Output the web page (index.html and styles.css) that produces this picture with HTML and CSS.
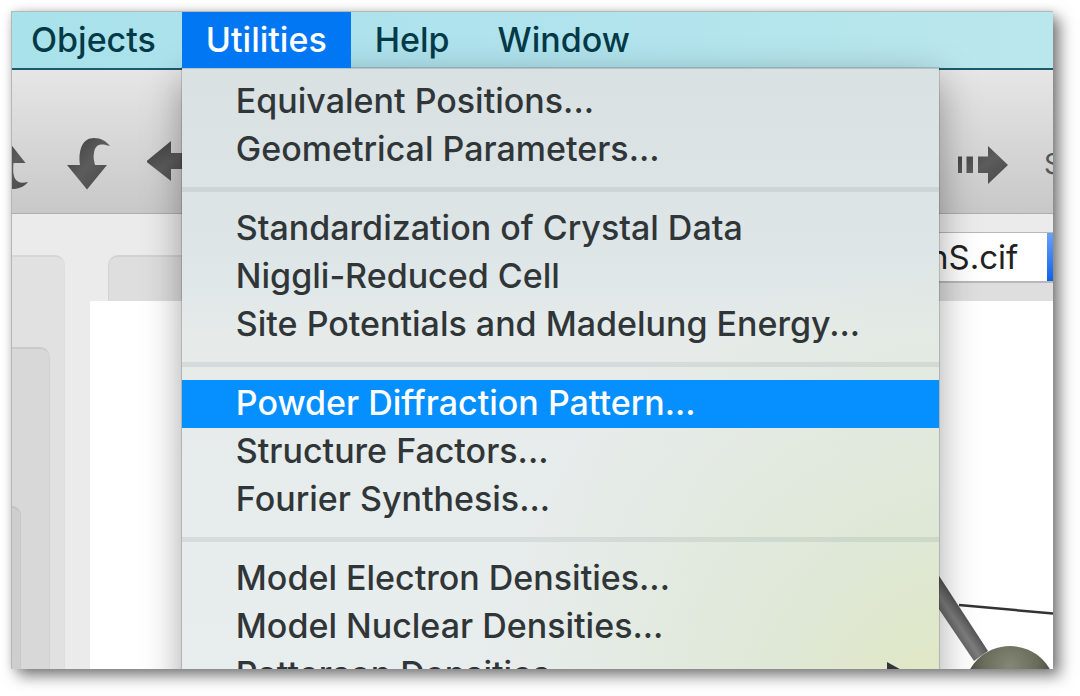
FILE: index.html
```html
<!DOCTYPE html>
<html lang="en">
<head>
<meta charset="utf-8">
<title>Utilities menu</title>
<link rel="stylesheet" href="styles.css">
</head>
<body>
<main class="window">
  <nav class="menubar" aria-label="Application menu">
    <button class="menubar-item" type="button">Objects</button>
    <div class="menubar-entry">
      <button class="menubar-item is-open" type="button" aria-expanded="true">Utilities</button>
      <div class="menu" role="menu">
        <button class="menu-item" type="button" role="menuitem">Equivalent Positions...</button>
        <button class="menu-item" type="button" role="menuitem">Geometrical Parameters...</button>
        <hr class="menu-separator">
        <button class="menu-item" type="button" role="menuitem">Standardization of Crystal Data</button>
        <button class="menu-item" type="button" role="menuitem">Niggli-Reduced Cell</button>
        <button class="menu-item" type="button" role="menuitem">Site Potentials and Madelung Energy...</button>
        <hr class="menu-separator">
        <button class="menu-item is-selected" type="button" role="menuitem">Powder Diffraction Pattern...</button>
        <button class="menu-item" type="button" role="menuitem">Structure Factors...</button>
        <button class="menu-item" type="button" role="menuitem">Fourier Synthesis...</button>
        <hr class="menu-separator">
        <button class="menu-item" type="button" role="menuitem">Model Electron Densities...</button>
        <button class="menu-item" type="button" role="menuitem">Model Nuclear Densities...</button>
        <button class="menu-item" type="button" role="menuitem">Patterson Densities
          <svg class="submenu-arrow" width="20" height="24" viewBox="0 0 20 24" aria-hidden="true"><path d="M0 0 20 11 0 22z"/></svg>
        </button>
      </div>
    </div>
    <button class="menubar-item" type="button">Help</button>
    <button class="menubar-item" type="button">Window</button>
  </nav>

  <div class="toolbar">
    <svg class="defs" width="0" height="0" aria-hidden="true">
      <defs>
        <linearGradient id="ink" x1="0" y1="0" x2="1" y2="1">
          <stop offset="0" stop-color="#3c3c3c"/><stop offset=".5" stop-color="#5c5c5c"/><stop offset="1" stop-color="#484848"/>
        </linearGradient>
      </defs>
    </svg>
    <button class="tool" type="button" aria-label="Rotate up">
      <svg width="19" height="52" viewBox="12 138 19 52"><path fill="url(#ink)" d="M6 138 25.500 163H13.500C12.500 174 13 186 28 182C23 188 17 189 11 189H0V163z"/></svg>
    </button>
    <button class="tool" type="button" aria-label="Rotate down">
      <svg width="44" height="52" viewBox="67 138 44 52"><path fill="url(#ink)" d="M67 165H80C78 149 83 138 94 138C101 138 106 141 110 146C101 143 95 144 94 153C93 157 94 161 95 165H107L87 189.500z"/></svg>
    </button>
    <button class="tool" type="button" aria-label="Rotate left">
      <svg width="50" height="52" viewBox="147 138 50 52"><path fill="url(#ink)" d="M146 161.500 171 141V153H197V169H171V181z"/></svg>
    </button>
    <span class="toolbar-space"></span>
    <button class="tool" type="button" aria-label="Move right">
      <svg width="50" height="52" viewBox="958 138 50 52"><path fill="url(#ink)" d="M958 156.500h4v16.500h-4zM966.500 156.500h6.500v16.500h-6.500zM978 156.500H988V146L1008 165 988 184V173H978z"/></svg>
    </button>
    <span class="toolbar-label">S</span>
  </div>

  <div class="workspace">
    <aside class="panel panel-outer"><div class="panel panel-middle"><div class="panel panel-inner"></div></div></aside>
    <section class="document">
      <div class="tab-strip"></div>
      <div class="canvas">
        <svg class="structure" width="116" height="96" viewBox="937 573 116 96" aria-hidden="true">
          <defs>
            <radialGradient id="atom" cx=".5" cy=".22" r=".5"><stop offset="0" stop-color="#858777"/><stop offset=".6" stop-color="#696b5b"/><stop offset="1" stop-color="#44453a"/></radialGradient>
            <linearGradient id="bond" gradientUnits="userSpaceOnUse" x1="949" y1="630" x2="967" y2="618"><stop offset="0" stop-color="#5c5c5c"/><stop offset=".5" stop-color="#7e7e7e"/><stop offset="1" stop-color="#525252"/></linearGradient>
          </defs>
          <path d="M959 605 1053 613.500" stroke="#333" stroke-width="2.500"/>
          <path d="M930 562 988 651 974 661 930 596z" fill="url(#bond)"/>
          <circle cx="1010" cy="692" r="46" fill="url(#atom)"/>
        </svg>
      </div>
      <label class="file-picker"><span class="picker-name">File</span>
        <select class="picker-select"><option>nS.cif</option></select>
        <span class="picker-button"></span>
      </label>
    </section>
  </div>
</main>
</body>
</html>
```

FILE: styles.css
```css
* { box-sizing: border-box; }

body {
  display: flex;
  height: 100vh;
  margin: 0;
  padding: 11px 27px 27px 11px;
  background: #fff;
  font-family: Inter, "Liberation Sans", sans-serif;
  font-size: 34px;
  font-weight: 500;
}

button {
  margin: 0;
  border: 0;
  padding: 0;
  background: none;
  color: inherit;
  font: inherit;
  white-space: nowrap;
}

.window {
  position: relative;
  display: flex;
  flex: 1;
  flex-direction: column;
  min-width: 0;
  overflow: hidden;
  border: 1px solid #b4b8b8;
  border-right-width: 0;
  border-bottom-width: 0;
  background: #ebebeb;
}

body::before {
  content: "";
  position: absolute;
  inset: 11px 27px 27px 11px;
  box-shadow: 7px 7px 14px rgba(0, 0, 0, .5), 0 0 8px rgba(0, 0, 0, .12);
}

.menubar {
  position: relative;
  z-index: 2;
  display: flex;
  border-bottom: 2px solid #1c596b;
  background: linear-gradient(90deg, #a9e2eb, #b0e3ed 50%, #bae7ec);
  color: #043a47;
}

.menubar-entry { position: relative; }

.menubar-item {
  position: relative;
  z-index: 1;
  display: block;
  height: 56px;
  padding: 0 24px;
  line-height: 54px;
}

.menubar > .menubar-item:first-child { padding: 0 26px 0 19px; }

.menubar-item.is-open {
  background: #0277f4;
  color: #fff;
}

.menu {
  position: absolute;
  top: 100%;
  left: 0;
  width: 757px;
  padding: 9px 0;
  border-top: 1px solid #b9c3c7;
  background:
    radial-gradient(circle at 105% 105%, #dfe7bc, rgba(221, 231, 210, .8) 22%, rgba(225, 233, 220, 0) 48%),
    linear-gradient(#dae1e3, #dde5e7 28%, #e6ebea 42%, #e8edee);
  box-shadow: 0 0 0 1px rgba(0, 0, 0, .14), 0 12px 36px rgba(0, 0, 0, .36);
  color: #303638;
}

.menu-item {
  display: flex;
  align-items: center;
  justify-content: space-between;
  width: 100%;
  height: 48px;
  padding: 0 32px 2px 54px;
  line-height: 46px;
  text-align: left;
}

.menu-item.is-selected {
  background: #068fff;
  color: #fff;
}

.menu-separator {
  height: 5px;
  margin: 13px 0;
  border: 0;
  background: rgba(90, 110, 110, .12);
}

.submenu-arrow { fill: #303638; }

.toolbar {
  display: flex;
  gap: 36px;
  padding: 68px 0 23px;
  border-bottom: 1px solid #adadad;
  background: linear-gradient(#e6e6e6, #c8c8c8);
}

.defs { position: absolute; }

.tool svg { display: block; }

.toolbar-space { flex: 1; }

.toolbar-label {
  width: 9px;
  overflow: hidden;
  color: #555;
  font-size: 28px;
  font-weight: 400;
  line-height: 52px;
}

.workspace {
  display: flex;
  flex: 1;
  gap: 25px;
  min-height: 0;
}

.panel {
  border: 2px solid #d4d4d4;
  border-width: 2px 1px 0 0;
  border-top-right-radius: 10px;
}

.panel-outer {
  width: 53px;
  margin-top: 41px;
  padding: 90px 14px 0 0;
  background: #e1e1e1;
  border-color: #d6d6d6 #dedede;
}

.panel-middle {
  height: 100%;
  padding: 157px 28px 0 0;
  background: #d8d8d8;
  border-color: #cacaca #d2d2d2;
}

.panel-inner {
  height: 100%;
  background: #cecece;
  border-color: #c2c2c2 #c8c8c8;
}

.document {
  position: relative;
  display: flex;
  flex: 1;
  flex-direction: column;
  min-width: 0;
  padding-top: 41px;
}

.tab-strip {
  height: 46px;
  margin-left: 18px;
  border: 2px solid #d2d2d2;
  border-width: 2px 0 0 1px;
  border-top-left-radius: 10px;
  background: #dedede;
}

.canvas {
  position: relative;
  flex: 1;
  background: #fff;
}

.structure {
  position: absolute;
  right: 0;
  bottom: 0;
}

.file-picker {
  position: absolute;
  top: 18px;
  right: 0;
  display: flex;
  width: 180px;
  height: 51px;
  border: 1px solid #b8b8b8;
  border-width: 1px 0 2px;
  background: #fff;
}

.picker-name {
  position: absolute;
  width: 1px;
  height: 1px;
  overflow: hidden;
  clip-path: inset(50%);
}

.picker-select {
  flex: 1;
  min-width: 0;
  padding: 0 0 0 56px;
  border: 0;
  appearance: none;
  background: none;
  color: #222;
  font: inherit;
  font-size: 33px;
  font-weight: 400;
}

.picker-button {
  width: 6px;
  background: linear-gradient(#6aa0fa, #0e62e8);
}
```
